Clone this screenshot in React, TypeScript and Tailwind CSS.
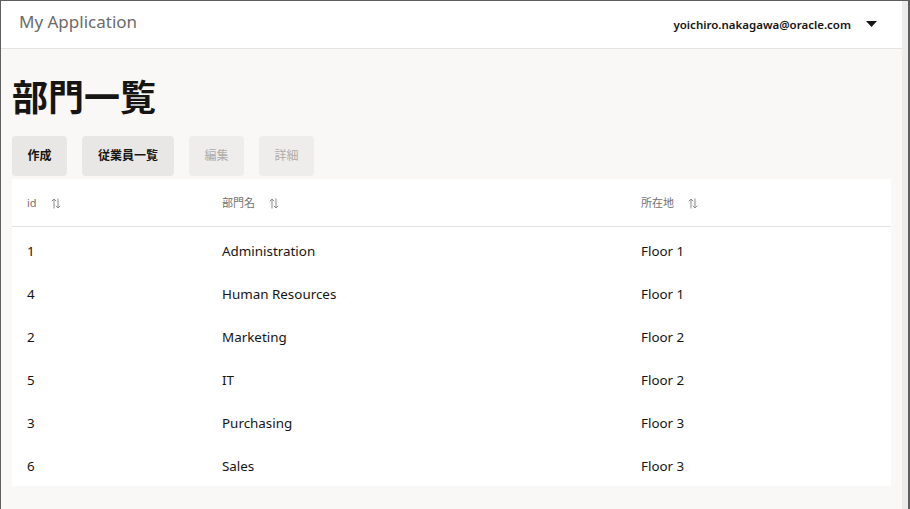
import React from 'react';

const rows = [
  { id: '1', name: 'Administration', loc: 'Floor 1' },
  { id: '4', name: 'Human Resources', loc: 'Floor 1' },
  { id: '2', name: 'Marketing', loc: 'Floor 2' },
  { id: '5', name: 'IT', loc: 'Floor 2' },
  { id: '3', name: 'Purchasing', loc: 'Floor 3' },
  { id: '6', name: 'Sales', loc: 'Floor 3' },
];

function SortIcon() {
  return (
    <svg width="10" height="11" viewBox="0 0 10 11" className="ml-[14px] text-[#8a8a8a]" fill="none" stroke="currentColor" strokeWidth="1">
      <path d="M3 10.5V1M0.8 3.2L3 1l2.2 2.2" />
      <path d="M7 0.5V10M4.8 7.8L7 10l2.2-2.2" />
    </svg>
  );
}

function Header({ label, w }: { label: string; w: string }) {
  return (
    <div className={`${w} flex items-center pl-[15px] pt-[1px]`}>
      <span className="text-[11px] text-[#707070]">{label}</span>
      <SortIcon />
    </div>
  );
}

export default function App() {
  return (
    <div
      className="flex h-[509px] w-[910px] border-l border-t border-[#5f5f5f] bg-[#f9f8f6] overflow-hidden"
      style={{ fontFamily: '"Noto Sans", "Noto Sans CJK JP", sans-serif' }}
    >
      <div className="flex flex-1 flex-col">
        <header className="flex h-[48px] items-center justify-between border-b border-[#e4e3e1] bg-white pl-[18px] pr-[25px]">
          <span className="mb-[5px] text-[17px] text-[#6b6b6b]">My Application</span>
          <div className="flex items-center gap-[15px]">
            <span className="text-[11.5px] font-semibold text-[#161513]">yoichiro.nakagawa@oracle.com</span>
            <svg width="11" height="6" viewBox="0 0 11 6" className="mb-[2px]"><path d="M0 0h11L5.5 6z" fill="#161513" /></svg>
          </div>
        </header>
        <main className="flex flex-col px-[11px]">
          <h1 className="mt-[27px] text-[36px] font-bold leading-[44px] text-[#161513]">部門一覧</h1>
          <div className="mt-[16px] flex gap-[15px]">
            <button className="h-[40px] w-[55px] rounded-[4px] bg-[#e8e7e5] text-[12px] font-bold text-[#161513]">作成</button>
            <button className="h-[40px] w-[92px] rounded-[4px] bg-[#e8e7e5] text-[12px] font-bold text-[#161513]">従業員一覧</button>
            <button className="h-[40px] w-[55px] rounded-[4px] bg-[#eeedeb] text-[12px] text-[#adabab]">編集</button>
            <button className="h-[40px] w-[55px] rounded-[4px] bg-[#eeedeb] text-[12px] text-[#adabab]">詳細</button>
          </div>
          <div className="mt-[3px] bg-white">
            <div className="flex h-[48px] items-center border-b border-[#e4e3e1]">
              <Header label="id" w="w-[195px]" />
              <Header label="部門名" w="w-[419px]" />
              <Header label="所在地" w="flex-1" />
            </div>
            {rows.map((r) => (
              <div key={r.id} className="flex h-[43.2px] items-center pt-[4px] text-[13.4px] text-[#161513]">
                <div className="w-[195px] pl-[15px]">{r.id}</div>
                <div className="w-[419px] pl-[15px]">{r.name}</div>
                <div className="flex-1 pl-[15px]">{r.loc}</div>
              </div>
            ))}
          </div>
        </main>
      </div>
      <div className="w-[6px] bg-[#ececec]" />
      <div className="w-[2px] bg-[#5f5f5f]" />
    </div>
  );
}
